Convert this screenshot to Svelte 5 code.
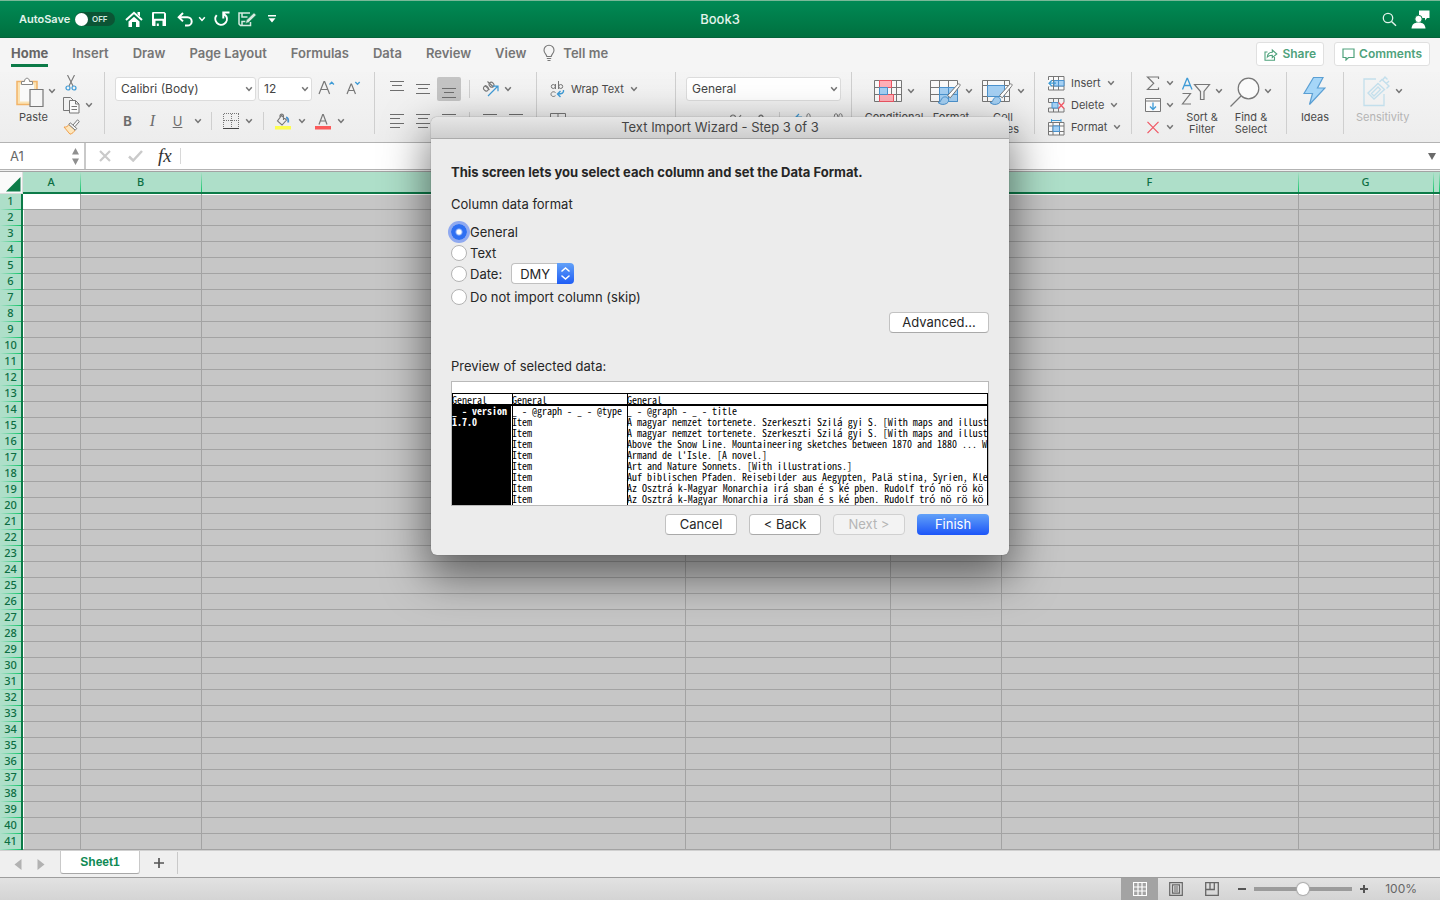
<script>
  const tabs = ['Home', 'Insert', 'Draw', 'Page Layout', 'Formulas', 'Data', 'Review', 'View'];
  const columns = ['A', 'B', 'C', 'D', 'E', 'F', 'G', ''];
  const rows = Array.from({ length: 41 }, (_, i) => i + 1);
  const preview = [
    ['_ - version', '_ - @graph - _ - @type', '_ - @graph - _ - title'],
    ['1.7.0', 'Item', 'A magyar nemzet tortenete. Szerkeszti Szilá gyi S. [With maps and illust'],
    ['', 'Item', 'A magyar nemzet tortenete. Szerkeszti Szilá gyi S. [With maps and illust'],
    ['', 'Item', 'Above the Snow Line. Mountaineering sketches between 1870 and 1880 ... W'],
    ['', 'Item', "Armand de l'Isle. [A novel.]"],
    ['', 'Item', 'Art and Nature Sonnets. [With illustrations.]'],
    ['', 'Item', 'Auf biblischen Pfaden. Reisebilder aus Aegypten, Palä stina, Syrien, Kle'],
    ['', 'Item', 'Az Osztrá k-Magyar Monarchia irá sban é s ké pben. Rudolf tró nö rö kö s'],
    ['', 'Item', 'Az Osztrá k-Magyar Monarchia irá sban é s ké pben. Rudolf tró nö rö kö s']
  ];
  let format = $state('general');
  let zoom = $state(100);
</script>

{#snippet chev()}
  <svg class="chev" width="8" height="6" viewBox="0 0 8 6"><path d="M1.2 1.2 4 4.4 6.8 1.2" fill="none" stroke="currentColor" stroke-width="1.5" /></svg>
{/snippet}

{#snippet lines(list)}
  <svg width="16" height="17" viewBox="0 0 16 17" shape-rendering="crispEdges">
    {#each list as [x, y, w]}<rect {x} {y} width={w} height="1" fill="#6e6e6e" />{/each}
  </svg>
{/snippet}

{#snippet brush()}
  <path d="M29.500 7c1 .8.6 1.600-.2 2.600l-9 11.200-2.700-2.300L27.500 7.600c.7-.7 1.300-1 2-.6z" fill="#fff" stroke="#777" />
  <path d="M8 25.500c2.500 0 2.400-1.600 3.600-3.600 1.300-2.200 4.200-2.700 6-1 1.700 1.700 1.200 4.300-.8 5.500-2.800 1.700-6.600 1.300-8.800-.9z" fill="#a5d0f3" stroke="#4b93cf" />
{/snippet}

<div class="app">
  <header class="titlebar">
    <div class="quick">
      <span class="autosave">AutoSave</span>
      <button class="toggle" role="switch" aria-checked="false" aria-label="AutoSave"><i></i>OFF</button>
      <button class="q home" aria-label="Home">
        <svg width="18" height="17" viewBox="0 0 18 17"><path d="M1 9 9 1.800 17 9" fill="none" stroke="#fff" stroke-width="2" /><path d="M12.500 1H15v4.500L12.500 3.300zM3.500 10.500 9 5.700l5.500 4.800V16H11v-5H7v5H3.500z" fill="#fff" /></svg>
      </button>
      <button class="q save" aria-label="Save">
        <svg width="14" height="14" viewBox="0 0 14 14"><path fill-rule="evenodd" d="M1 0h11.500L14 1.500V14H1a1 1 0 0 1-1-1V1a1 1 0 0 1 1-1zm1 1.500v5.200h10V1.500zM3.500 8.700V14h1.300v-2.500h2V14h3.700V8.700z" fill="#fff" /></svg>
      </button>
      <button class="q undo" aria-label="Undo">
        <svg width="16" height="15" viewBox="0 0 16 15"><path d="M6 1 1.700 5.200 6 9.400M2 5.200h8.500a4.200 4.200 0 0 1 0 8.400H8" fill="none" stroke="#fff" stroke-width="2" /></svg>
      </button>
      <button class="q undo-more" aria-label="Undo list">{@render chev()}</button>
      <button class="q redo" aria-label="Repeat">
        <svg width="16" height="16" viewBox="0 0 16 16"><path d="M2.700 4.200A5.800 5.800 0 1 0 12.300 5.300L9.500 2.500M9.300 7.500V1.500H15.500" fill="none" stroke="#fff" stroke-width="2" /></svg>
      </button>
      <button class="q edit" aria-label="Edit">
        <svg width="19" height="15" viewBox="0 0 19 15"><path d="M12 1H1v11l1.500 1.500H12.500V10M4 1.500v3.500h5.500M4 13V9.500h3.500" fill="none" stroke="#d5ebe0" stroke-width="1.500" /><path d="M16 .8 18.300 3l-7.600 7.400-3.200 1 .9-3.300z" fill="#d5ebe0" stroke="#067a48" stroke-width=".6" /></svg>
      </button>
      <button class="q more" aria-label="Customize toolbar">
        <svg width="8" height="8" viewBox="0 0 8 8"><path d="M0 0h8v1.500H0zM.5 3.200h7L4 7.500z" fill="#fff" /></svg>
      </button>
    </div>
    <h1>Book3</h1>
    <div class="account">
      <button class="q" aria-label="Search">
        <svg width="15" height="15" viewBox="0 0 15 15"><circle cx="6" cy="6" r="4.700" fill="none" stroke="#e3f3eb" stroke-width="1.300" /><path d="m9.500 9.500 4.500 4.300" stroke="#e3f3eb" stroke-width="1.500" /></svg>
      </button>
      <button class="q" aria-label="Account">
        <svg width="19" height="19" viewBox="0 0 19 19"><path d="M8 .5h10.500V8H16l-2 2.500V8H8z" fill="#fff" /><circle cx="7.500" cy="9" r="3.700" fill="#fff" stroke="#057b48" stroke-width="1" /><path d="M.5 18.500c.4-4 2.500-6 7-6s6.600 2 7 6z" fill="#fff" /></svg>
      </button>
    </div>
  </header>

  <nav class="tabs">
    {#each tabs as tab, i}
      <button class="tab" class:active={i === 0}>{tab}</button>
    {/each}
    <button class="tab tell">
      <svg width="12" height="18" viewBox="0 0 12 18"><path d="M3.800 12.500c0-2-2.800-3-2.800-6.300a5 5 0 0 1 10 0c0 3.300-2.800 4.300-2.800 6.300zM3.800 14.500h4.400M4.500 16.500h3" fill="none" stroke="#777" stroke-width="1.100" /></svg>
      Tell me
    </button>
    <span class="spacer"></span>
    <div class="actions">
      <button class="action">
        <svg width="14" height="13" viewBox="0 0 14 13"><path d="M3.500 4H1v8.300h9.500V9M3.300 9c.3-3.500 2.200-4.600 5-4.700V2l4.500 4-4.500 3.700V7.200C6 7.200 4.600 7.500 3.300 9z" fill="none" stroke="#4fa27c" stroke-width="1.100" /></svg>
        Share
      </button>
      <button class="action">
        <svg width="13" height="13" viewBox="0 0 13 13"><path d="M1 1h11v8.500H6.500L4 12V9.500H1z" fill="none" stroke="#4fa27c" stroke-width="1.200" /></svg>
        Comments
      </button>
    </div>
  </nav>

  <section class="ribbon" aria-label="Home ribbon">
    <div class="group clipboard">
      <button class="big paste">
        <span class="pic">
          <svg width="28" height="31" viewBox="0 0 28 31"><path d="M1 5.500h20v23H1z" fill="#fbe3b4" stroke="#f2b468" stroke-width="1.500" /><path d="M4 8.500h14v17H4z" fill="#fafafa" /><path d="M5.500 8.500v-3h3c0-4.400 5-4.400 5 0h3v3z" fill="#fff" stroke="#888" /><path d="M14 13.500h13v17H14z" fill="#f6f6f6" stroke="#777" stroke-width="1.200" /></svg>
          {@render chev()}
        </span>
        <span class="pl">Paste</span>
      </button>
      <div class="stack">
        <button aria-label="Cut"><svg width="12" height="16" viewBox="0 0 12 16"><path d="M2.500 0 8 11M9.500 0 4 11" fill="none" stroke="#777" stroke-width="1.100" /><g fill="none" stroke="#3f9bd6" stroke-width="1.200"><circle cx="3" cy="13" r="2" /><circle cx="9" cy="13" r="2" /></g></svg></button>
        <button aria-label="Copy"><svg width="17" height="17" viewBox="0 0 17 17"><path d="M6.500 13.500h-6V.5h7l3 3" fill="none" stroke="#777" /><path d="M6.500 3.500h6l3.500 3.500v9H6.500zM12.500 3.500V7H16M8.500 9.500H14M8.500 12.500H14" fill="#fafafa" stroke="#777" /></svg>{@render chev()}</button>
        <button aria-label="Format painter"><svg width="17" height="16" viewBox="0 0 17 16"><path d="M1 8c2 .4 4-.7 5-2.500l6 5.500c-.8 2-2.500 3.500-5 4.200z" fill="#fde6bd" stroke="#f0a04b" /><path d="m5.800 5.500 1.500-1.700 6.500 5.700-1.600 1.700zM10 6 14.500.8l1.800 1.700-4.200 5" fill="#f6f6f6" stroke="#777" /></svg></button>
      </div>
    </div>

    <div class="group font">
      <div class="row">
        <label class="field family"><select aria-label="Font"><option>Calibri (Body)</option></select>{@render chev()}</label>
        <label class="field size"><select aria-label="Font size"><option>12</option></select>{@render chev()}</label>
        <button class="grow" aria-label="Increase font size"><svg width="17" height="16" viewBox="0 0 17 16"><path d="M1 13 6 .5h.6L11.600 13M2.800 8.500h7" fill="none" stroke="#777" stroke-width="1.200" /><path d="m11.500 3.500 2.200-2.300 2.200 2.300" fill="none" stroke="#3f9bd6" stroke-width="1.300" /></svg></button>
        <button class="grow" aria-label="Decrease font size"><svg width="15" height="16" viewBox="0 0 15 16"><path d="M1 13 5 3h.5l4 10M2.400 9.500h5.700" fill="none" stroke="#777" stroke-width="1.200" /><path d="m9.300 1 2.200 2.300L13.700 1" fill="none" stroke="#3f9bd6" stroke-width="1.300" /></svg></button>
      </div>
      <div class="row glyphs">
        <button class="bold">B</button>
        <button class="ital">I</button>
        <button class="under">U</button>
        <button class="slim" aria-label="Underline styles">{@render chev()}</button>
        <i class="sep"></i>
        <button class="wide" aria-label="Borders"><svg width="16" height="16" viewBox="0 0 16 16" shape-rendering="crispEdges"><path d="M.5.5v14M15.500.5v14M.5.5h15M8 .5v14M.5 7.500h15" fill="none" stroke="#777" stroke-dasharray="1 1" /><path d="M0 15.500h16" stroke="#444" stroke-width="1" /></svg>{@render chev()}</button>
        <i class="sep"></i>
        <button class="wide" aria-label="Fill color"><svg width="17" height="17" viewBox="0 0 17 17"><path d="M6.500 2.500 11.500 7l-4.500 5L2.500 8zM5 4V2.500a1.800 1.800 0 0 1 3.500 0V7" fill="none" stroke="#777" stroke-width="1.100" /><path d="M11 4.500c2 0 2.500 2 2.200 5" fill="none" stroke="#4b93cf" stroke-width="1.800" /><path d="M0 13h16v3.500H0z" fill="#fdfd4e" /></svg>{@render chev()}</button>
        <button class="wide" aria-label="Font color"><svg width="16" height="17" viewBox="0 0 16 17"><path d="m4 11.500 3.700-10h.6l3.700 10M5.300 8h5.400" fill="none" stroke="#777" stroke-width="1.200" /><path d="M0 13h16v3.500H0z" fill="#fb5a5a" /></svg>{@render chev()}</button>
      </div>
    </div>

    <div class="group align">
      <div class="row">
        <button aria-label="Top">{@render lines([[1, 0, 14], [3, 4, 10], [1, 9, 14]])}</button>
        <button aria-label="Middle">{@render lines([[1, 3, 14], [3, 7, 10], [1, 12, 14]])}</button>
        <button class="pressed" aria-label="Bottom">{@render lines([[1, 7, 14], [3, 11, 10], [1, 16, 14]])}</button>
        <i class="sep"></i>
        <button class="wide" aria-label="Orientation"><svg width="17" height="16" viewBox="0 0 17 16"><g fill="none" stroke="#777" stroke-width="1.100"><ellipse cx="4" cy="7.500" rx="2.200" ry="2.600" transform="rotate(-45 4 7.500)" /><path d="m3 4.500 4.500 4.300M5.500.500l6 5.500" /><ellipse cx="9.500" cy="3.700" rx="2.200" ry="2.600" transform="rotate(-45 9.500 3.700)" /></g><path d="M6 15 15.500 5.500M11 5.200h5v5" fill="none" stroke="#3f9bd6" stroke-width="1.200" /></svg>{@render chev()}</button>
      </div>
      <div class="row">
        <button aria-label="Left">{@render lines([[1, 1, 14], [1, 5, 10], [1, 10, 14], [1, 14, 10]])}</button>
        <button aria-label="Center">{@render lines([[1, 1, 14], [3, 5, 10], [1, 10, 14], [3, 14, 10]])}</button>
        <button aria-label="Right">{@render lines([[1, 1, 14], [5, 5, 10], [1, 10, 14], [5, 14, 10]])}</button>
        <i class="sep"></i>
        <button aria-label="Decrease indent">{@render lines([[1, 1, 14], [7, 5, 8], [7, 10, 8], [1, 14, 14]])}</button>
        <button aria-label="Increase indent">{@render lines([[1, 1, 14], [7, 5, 8], [7, 10, 8], [1, 14, 14]])}</button>
      </div>
    </div>

    <div class="group wrap">
      <div class="row">
        <button class="text"><svg width="15" height="17" viewBox="0 0 15 17"><g fill="none" stroke="#777"><circle cx="3.300" cy="5.500" r="2" /><path d="M5.500 3v5M8.500 0v8M5.500 11.500c-2-1.500-4.500-.5-4.500 1.700s2.500 3 4.500 1.500" /><circle cx="10.700" cy="5.500" r="2" /></g><path d="M13.500 9c.5 3-1.500 4-5.500 4M10.500 10 7.500 13l3 3" fill="none" stroke="#3f9bd6" stroke-width="1.400" /></svg>Wrap Text{@render chev()}</button>
      </div>
      <div class="row">
        <button aria-label="Merge"><svg width="16" height="16" viewBox="0 0 16 16"><path d="M.5.500h15v14H.5zM8 .5v4M.5 4.500h15M.5 10.500h15" fill="none" stroke="#777" /></svg></button>
      </div>
    </div>

    <div class="group number">
      <label class="field numfmt"><select aria-label="Number format"><option>General</option></select>{@render chev()}</label>
      <div class="row numrow">
        <button aria-label="Percent"><svg width="14" height="14" viewBox="0 0 14 14"><path d="M12 1 3 13" stroke="#777" stroke-width="1.200" /><g fill="none" stroke="#777" stroke-width="1.200"><circle cx="4" cy="3.500" r="2.500" /><circle cx="11" cy="10.500" r="2.500" /></g></svg></button>
        <button aria-label="Comma style"><svg width="6" height="14" viewBox="0 0 6 14"><path d="M1 3.500a2 2 0 1 1 3.800.6C4.800 7 3.500 9 1 10.500" fill="none" stroke="#777" stroke-width="1.400" /></svg></button>
        <i class="sep"></i>
        <button aria-label="Increase decimal"><svg width="17" height="17" viewBox="0 0 17 17"><path d="M1 4h6M4 1 1 4l3 3" fill="none" stroke="#3f9bd6" stroke-width="1.200" /><ellipse cx="13.500" cy="3.500" rx="1.700" ry="2.800" fill="none" stroke="#777" /></svg></button>
        <button aria-label="Decrease decimal"><svg width="17" height="17" viewBox="0 0 17 17"><g fill="none" stroke="#777"><ellipse cx="9" cy="3.500" rx="1.700" ry="2.800" /><ellipse cx="13.500" cy="3.500" rx="1.700" ry="2.800" /></g></svg></button>
      </div>
    </div>

    <div class="group styles">
      <button class="big cond">
        <span class="pic"><svg width="29" height="28" viewBox="0 0 29 28"><path d="M.5 3.500h27v21H.5zM.5 10.500h27M.5 17.500h27M5.500 3.500v21M17.500 3.500v21M22.500 3.500v21" fill="#fafafa" stroke="#777" /><path d="M5.500 3.500h12v7h-12zM5.500 17.500h14v7h-14z" fill="#ffb0b8" stroke="#ee5563" /><path d="M5.500 10.500h8v7h-8z" fill="#a5d0f3" stroke="#4b93cf" /></svg>{@render chev()}</span>
        <span>Conditional<br />Formatting</span>
      </button>
      <button class="big">
        <span class="pic"><svg width="31" height="28" viewBox="0 0 31 28"><path d="M.5 3.500h27v21H.5zM.5 10.500h27M.5 17.500h27M9.500 3.500v21M18.500 3.500v21" fill="#fafafa" stroke="#777" /><path d="M9.500 10.500h18v14h-18zM18.500 10.500v14M9.500 17.500h18" fill="#a5d0f3" stroke="#4b93cf" />{@render brush()}</svg>{@render chev()}</span>
        <span>Format<br />as Table</span>
      </button>
      <button class="big">
        <span class="pic"><svg width="31" height="28" viewBox="0 0 31 28"><path d="M.5 3.500h27v21H.5zM.5 8.500h27M.5 19.500h27M5.500 3.500v21M22.500 3.500v21" fill="#fafafa" stroke="#777" /><path d="M5.500 8.500h17v11h-17z" fill="#a5d0f3" stroke="#4b93cf" />{@render brush()}</svg>{@render chev()}</span>
        <span>Cell<br />Styles</span>
      </button>
    </div>

    <div class="group cells">
      <div class="stack">
        <button class="text"><svg width="17" height="15" viewBox="0 0 17 15"><path d="M.5.500h15.500v13.500H.5zM.5 4.500H16M.5 10H16M5.500.5V14M10.500.5V14" fill="#fafafa" stroke="#777" /><path d="M6 4.500h10V10H6zM10.500 4.500V10" fill="#a5d0f3" stroke="#4b93cf" /><path d="M0 4h4v6.500H0z" fill="#fafafa" /><path d="M1 7.200h7M4 4.200l-3 3 3 3" fill="none" stroke="#3f9bd6" stroke-width="1.300" /></svg>Insert{@render chev()}</button>
        <button class="text"><svg width="17" height="15" viewBox="0 0 17 15"><path d="M.5 4.500v-4H16v4M.5 10v4H16v-4M5.500.5v4M10.500.5v4M5.500 10v4M10.500 10v4M.5 4.500h10M.5 10h10" fill="none" stroke="#777" /><path d="M4 4.500h6V10H4z" fill="#a5d0f3" stroke="#4b93cf" /><path d="m10.500 4.500 5.500 6M16 4.500l-5.500 6" stroke="#f05563" stroke-width="1.300" /></svg>Delete{@render chev()}</button>
        <button class="text"><svg width="17" height="17" viewBox="0 0 17 17"><path d="M.5 3.500H16V16H.5zM.5 7H16M.5 12.500H16M5 3.500V16M11.500 3.500V16" fill="#fafafa" stroke="#777" /><path d="M5 7h6.500v5.500H5z" fill="#a5d0f3" stroke="#4b93cf" /><path d="M3.500 1.500h9.500M3.500 0v3M13 0v3" fill="none" stroke="#3f9bd6" /></svg>Format{@render chev()}</button>
      </div>
    </div>

    <div class="group editing">
      <div class="stack">
        <button aria-label="AutoSum"><svg width="16" height="15" viewBox="0 0 16 15"><path d="M13.500 3V1h-11l6.200 6.300L2.500 13.500h11v-2" fill="none" stroke="#777" stroke-width="1.200" /></svg>{@render chev()}</button>
        <button aria-label="Fill"><svg width="16" height="14" viewBox="0 0 16 14"><path d="M.5.500h15v13H.5zM.5 3h15" fill="#fafafa" stroke="#777" /><path d="M8 4.500v7M5 8.500l3 3 3-3" fill="none" stroke="#3f9bd6" stroke-width="1.300" /></svg>{@render chev()}</button>
        <button aria-label="Clear"><svg width="16" height="13" viewBox="0 0 16 13"><path d="m2.500.8 11 11.400M13.500.8l-11 11.400" stroke="#f05563" stroke-width="1.200" /></svg>{@render chev()}</button>
      </div>
      <button class="big">
        <span class="pic"><svg width="30" height="29" viewBox="0 0 30 29"><path d="M1.500 12.500 6 1.500h.5l4.500 11M3 8.500h6.500" fill="none" stroke="#3f9bd6" stroke-width="1.300" /><path d="M1.500 16.500h8l-8 10.500h8.500M13.500 7.500h15l-5.500 7v8h-3.500v-8z" fill="none" stroke="#777" stroke-width="1.200" /></svg>{@render chev()}</span>
        <span>Sort &amp;<br />Filter</span>
      </button>
      <button class="big">
        <span class="pic"><svg width="30" height="31" viewBox="0 0 30 31"><circle cx="18.500" cy="12.500" r="10.300" fill="#fafafa" stroke="#777" stroke-width="1.200" /><path d="M11 20 .5 30.500" stroke="#777" stroke-width="1.300" /></svg>{@render chev()}</span>
        <span>Find &amp;<br />Select</span>
      </button>
    </div>

    <div class="group ideas">
      <button class="big">
        <span class="pic"><svg width="23" height="30" viewBox="0 0 23 30"><path d="M10.500 1.500H20L14.500 12H22L6.500 28.500 9.500 17.500H1z" fill="#a5d6f8" stroke="#5b9fd3" stroke-width="1.200" /></svg></span>
        <span>Ideas</span>
      </button>
    </div>

    <div class="group sens">
      <button class="big faded" disabled>
        <span class="pic"><svg width="28" height="31" viewBox="0 0 28 31"><path d="M13 3H1v26.500h20V18" fill="none" stroke="#c3dfec" stroke-width="1.300" /><path d="M5 17 15 7.500l6.500 6L11 23zM8.500 17.500 15 11l2.500 2.500L11 20zM16.500 6l2.500-2.500L26 10l-2.500 2.500M19.500 4 22 1l2.500 2.500M23 8l3-3" fill="none" stroke="#c3dfec" stroke-width="1.400" /></svg>{@render chev()}</span>
        <span>Sensitivity</span>
      </button>
    </div>
  </section>

  <section class="formula" aria-label="Formula bar">
    <div class="namebox">
      <input aria-label="Name box" value="A1" />
      <svg width="9" height="19" viewBox="0 0 9 19"><path d="M4.500 1 8 7.500H1zM4.500 18 8 11.500H1z" fill="#8f8f8f" /></svg>
    </div>
    <button class="f-cancel" aria-label="Cancel entry"><svg width="12" height="12" viewBox="0 0 12 12"><path d="m1 1 10 10M11 1 1 11" stroke="#cacaca" stroke-width="2.200" /></svg></button>
    <button class="f-ok" aria-label="Confirm entry"><svg width="15" height="12" viewBox="0 0 15 12"><path d="m1 6.500 4.200 4L14 1" fill="none" stroke="#cacaca" stroke-width="2.500" /></svg></button>
    <button class="f-fx" aria-label="Insert function"><em>fx</em></button>
    <input class="f-input" aria-label="Formula" />
    <button class="f-expand" aria-label="Expand"><svg width="8" height="7" viewBox="0 0 8 7"><path d="M0 0h8L4 7z" fill="#6a6a6a" /></svg></button>
  </section>

  <main class="sheet">
    <table class="grid">
      <colgroup>
        <col class="c-head" /><col class="c-a" /><col class="c-b" /><col class="c-c" /><col class="c-d" /><col class="c-e" /><col class="c-f" /><col class="c-g" /><col />
      </colgroup>
      <thead>
        <tr>
          <th class="corner"><svg width="16" height="16" viewBox="0 0 16 16"><path d="M15.500 1v14.500H1z" fill="#0c7b48" /></svg></th>
          {#each columns as c}<th scope="col">{c}</th>{/each}
        </tr>
      </thead>
      <tbody>
        {#each rows as r}
          <tr>
            <th scope="row">{r}</th>
            {#each columns as c}<td class:cursor={r === 1 && c === 'A'}></td>{/each}
          </tr>
        {/each}
      </tbody>
    </table>
  </main>

  <nav class="sheets">
    <button class="arrow" aria-label="Previous sheet"><svg width="8" height="11" viewBox="0 0 8 11"><path d="M7.500 0v11L.5 5.500z" fill="#b2b2b2" /></svg></button>
    <button class="arrow" aria-label="Next sheet"><svg width="8" height="11" viewBox="0 0 8 11"><path d="M.5 0v11l7-5.500z" fill="#b2b2b2" /></svg></button>
    <button class="sheet-tab">Sheet1</button>
    <button class="add" aria-label="Add sheet"><svg width="10" height="10" viewBox="0 0 10 10"><path d="M5 0v10M0 5h10" stroke="#555" stroke-width="1.700" /></svg></button>
  </nav>

  <footer class="status">
    <button class="view on" aria-label="Normal view"><svg width="14" height="14" viewBox="0 0 14 14"><path d="M.5.500h13v13H.5zM5 .5v13M9 .5v13M.5 5h13M.5 9h13" fill="none" stroke="#fff" stroke-width="1.200" /></svg></button>
    <button class="view" aria-label="Page layout view"><svg width="14" height="14" viewBox="0 0 14 14"><path d="M.7.700h12.600v12.600H.7zM3.500 2.800h7v8.400h-7zM5 5h4M5 7h4M5 9h4" fill="none" stroke="#666" stroke-width="1.200" /></svg></button>
    <button class="view" aria-label="Page break view"><svg width="14" height="14" viewBox="0 0 14 14"><path d="M.7.700h12.600v12.600H.7zM.7 7.500h8.600V.7M5 .7v6.800" fill="none" stroke="#666" stroke-width="1.300" /></svg></button>
    <button class="zoom-step" aria-label="Zoom out"><svg width="8" height="8" viewBox="0 0 8 8"><path d="M0 4h8" stroke="#555" stroke-width="2" /></svg></button>
    <input type="range" aria-label="Zoom" min="0" max="200" bind:value={zoom} />
    <button class="zoom-step" aria-label="Zoom in"><svg width="8" height="8" viewBox="0 0 8 8"><path d="M4 0v8M0 4h8" stroke="#555" stroke-width="2" /></svg></button>
    <output>{zoom}%</output>
  </footer>

  <div class="overlay">
    <div class="dialog" role="dialog" aria-labelledby="dlg-title">
      <div class="dlg-title" id="dlg-title">Text Import Wizard - Step 3 of 3</div>
      <form class="dlg-body" onsubmit={(e) => e.preventDefault()}>
        <h2>This screen lets you select each column and set the Data Format.</h2>
        <fieldset>
          <legend>Column data format</legend>
          <label class="opt"><input type="radio" name="fmt" value="general" bind:group={format} />General</label>
          <label class="opt"><input type="radio" name="fmt" value="text" bind:group={format} />Text</label>
          <div class="opt-row">
            <label class="opt"><input type="radio" name="fmt" value="date" bind:group={format} />Date:</label>
            <label class="dmy">
              <select aria-label="Date order"><option>DMY</option></select>
              <svg width="17" height="20" viewBox="0 0 17 20"><path d="M5 7.500 8.500 4.500 12 7.500M5 12.500l3.500 3 3.500-3" fill="none" stroke="#fff" stroke-width="1.600" stroke-linecap="round" /></svg>
            </label>
          </div>
          <label class="opt last"><input type="radio" name="fmt" value="skip" bind:group={format} />Do not import column (skip)</label>
        </fieldset>
        <button class="btn advanced" type="button">Advanced...</button>
        <p class="preview-label">Preview of selected data:</p>
        <div class="preview">
          <table>
            <colgroup><col class="p1" /><col class="p2" /><col /></colgroup>
            <thead><tr><th>General</th><th>General</th><th>General</th></tr></thead>
            <tbody>
              {#each preview as line}
                <tr>{#each line as cell}<td>{cell}</td>{/each}</tr>
              {/each}
            </tbody>
          </table>
        </div>
        <div class="buttons">
          <button class="btn" type="button">Cancel</button>
          <button class="btn" type="button">&lt; Back</button>
          <button class="btn" type="button" disabled>Next &gt;</button>
          <button class="btn primary" type="submit">Finish</button>
        </div>
      </form>
    </div>
  </div>
</div>

<style>
  :global(body) { margin: 0; }
  * { box-sizing: border-box; }
  .app {
    position: relative;
    display: flex;
    flex-direction: column;
    min-height: 100vh;
    overflow: hidden;
    font: 13px/16px Inter, "Liberation Sans", sans-serif;
    color: #4a4a4a;
    background: #efefef;
  }
  svg { display: block; flex: none; }
  button, select, input { font: inherit; color: inherit; }
  button { padding: 0; border: 0; background: none; display: flex; align-items: center; }
  .chev { color: #757575; }

  .titlebar {
    display: grid;
    grid-template-columns: 1fr auto 1fr;
    align-items: center;
    height: 38px;
    border-top: 1px solid #79b898;
    border-bottom: 1px solid #05633a;
    background: linear-gradient(#008a55, #00703f);
    color: #e3f3eb;
  }
  .titlebar h1 { margin: 0; font-size: 13px; font-weight: 500; }
  .titlebar .chev { color: #fff; }
  .quick { display: flex; align-items: center; padding-left: 19px; }
  .autosave { width: 56px; font-size: 11px; font-weight: 600; }
  .toggle {
    width: 40px; height: 14px; gap: 4px; border-radius: 7px;
    background: #0b5434; color: #d5ebe0; font-size: 8px; font-weight: 600;
  }
  .toggle i { width: 13px; height: 13px; border-radius: 50%; background: #fff; }
  .q.home { margin-left: 10px; }
  .q.save { margin-left: 9px; }
  .q.undo { margin-left: 11px; }
  .q.undo-more { margin-left: 5px; }
  .q.redo { margin-left: 8px; }
  .q.edit { margin-left: 8px; }
  .q.more { margin-left: 11px; }
  .account { display: flex; justify-content: flex-end; align-items: center; gap: 14px; padding-right: 10px; }

  .tabs { display: flex; align-items: center; height: 34px; padding: 0 10px 2px 11px; gap: 24px; background: #f5f5f5; }
  .tab { font-weight: 600; color: #767676; height: 25px; border-bottom: 3px solid transparent; padding-top: 1px; }
  .tab.active { font-weight: 700; color: #666; border-bottom-color: #0c7b48; }
  .tell { gap: 8px; margin-left: -7px; }
  .spacer { flex: 1; }
  .actions { display: flex; gap: 10px; }
  .action {
    height: 24px; gap: 4px; padding: 0 7px; border: 1px solid #e0e0e0; border-radius: 3px;
    background: #fff; color: #4fa27c; font-size: 12px; font-weight: 600;
  }

  .ribbon { display: flex; padding-bottom: 8px; background: linear-gradient(#f4f4f4, #ededed); font-size: 11px; line-height: 12px; }
  .group { display: flex; flex: none; height: 62px; padding-top: 5px; border-right: 1px solid #cfcfcf; }
  .group:last-child { border: 0; }
  .row { display: flex; align-items: center; height: 24px; }
  .sep { width: 1px; height: 18px; background: #cfcfcf; }
  .big { flex-direction: column; text-align: center; justify-content: flex-start; }
  .big .pic { display: flex; flex: none; align-items: center; gap: 4px; height: 28px; }
  .big > span:last-child { margin-top: 6px; }
  .stack { display: flex; flex-direction: column; margin-top: -5px; }
  .stack button { flex: none; gap: 5px; height: 22px; }
  .text { gap: 6px; white-space: nowrap; }
  .stack .text { gap: 6px; }

  .clipboard { width: 105px; padding-left: 16px; gap: 7px; }
  .clipboard .big { align-items: flex-start; }
  .clipboard .pl { padding-left: 3px; }
  .clipboard .stack button:first-child { padding-left: 2px; }

  .font { flex-direction: column; gap: 8px; width: 270px; padding-left: 10px; }
  .field { position: relative; display: flex; align-items: center; }
  .field select {
    appearance: none; width: 100%; height: 24px; padding: 0 16px 0 5px; font-size: 12px;
    border: 1px solid #dcdcdc; border-radius: 3px; background: #fff; color: #444;
  }
  .field .chev { position: absolute; right: 3px; pointer-events: none; }
  .family { width: 141px; margin-right: 2px; }
  .size { width: 54px; margin-right: 6px; }
  .grow { width: 28px; }
  .glyphs button { width: 25px; justify-content: center; font-size: 13px; color: #6d6d6d; }
  .glyphs .slim { width: 16px; }
  .glyphs .sep { margin: 0 6px 0 5px; }
  .glyphs .wide { width: 40px; gap: 6px; }
  .bold { font-weight: 700; }
  .glyphs .ital { font: italic 16px/16px "Liberation Serif", serif; }
  .under { text-decoration: underline; }

  .align { flex-direction: column; gap: 8px; width: 162px; padding-left: 10px; }
  .align .row button { width: 24px; height: 24px; margin-right: 2px; justify-content: center; }
  .align .sep { margin: 0 8px 0 6px; }
  .align .row .wide { width: 38px; gap: 5px; }
  .align .pressed { background: #c4c4c4; border-radius: 2px; }

  .wrap { flex-direction: column; gap: 8px; width: 139px; padding-left: 13px; }
  .number { flex-direction: column; gap: 8px; width: 176px; padding-left: 10px; }
  .numfmt { width: 155px; }
  .numrow { padding-left: 43px; gap: 15px; }

  .styles { width: 183px; padding-left: 12px; gap: 2px; }
  .styles .big { width: 50px; }
  .styles .cond { width: 60px; }
  .cells { width: 97px; padding-left: 13px; }

  .editing { width: 155px; padding-left: 13px; gap: 7px; }
  .ideas { width: 57px; justify-content: center; }
  .sens { flex: 1; padding-left: 12px; }
  .faded { color: #b4b4b4; }

  .formula { display: flex; align-items: center; height: 28px; border: solid #b3b3b3; border-width: 1px 0; background: #fff; }
  .namebox { display: flex; align-items: center; width: 86px; height: 26px; border-right: 2px solid #c9c9c9; padding: 0 4px 0 10px; }
  .namebox input { flex: 1; min-width: 0; padding: 0; border: 0; background: none; color: #666; outline: 0; }
  .f-cancel { margin-left: 13px; }
  .f-ok { margin-left: 17px; }
  .f-fx { width: 22px; margin-left: 15px; font: 19px/20px "Liberation Serif", serif; color: #333; }
  .f-input { flex: 1; height: 16px; border: 0; border-left: 1px solid #d8d8d8; outline: 0; }
  .f-expand { padding: 0 4px; }

  .sheet { flex: 1; margin-top: 1px; border-top: 1px solid #a3a3a3; background: #c6c6c6; }
  .grid { width: 100%; table-layout: fixed; border-spacing: 0; font: 11px/14px "Noto Sans", sans-serif; color: #0c6e43; }
  .grid th, .grid td { padding: 0; }
  .grid th { font-weight: 500; }
  .c-head { width: 23px; }
  .c-a { width: 58px; }
  .c-b { width: 121px; }
  .c-c { width: 484px; }
  .c-d { width: 205px; }
  .c-e { width: 111px; }
  .c-f { width: 297px; }
  .c-g { width: 135px; }
  .grid thead th { height: 22px; border-bottom: 2px solid #0c7b48; }
  .grid thead th[scope] { padding-right: 2px; background: linear-gradient(#aedfc9, #10c468) right / 1px 100% no-repeat, #aedfc9; }
  .grid thead th.corner { border-right: 1px solid #ddd; border-bottom: 1px solid #ddd; background: #fafafa; }
  .corner svg { margin: 3px 0 0 5px; }
  .grid tbody th {
    height: 16px;
    padding-bottom: 2px;
    border-right: 2px solid #0c7b48;
    background: linear-gradient(90deg, #aedfc9, #10c468) bottom / 100% 1px no-repeat, #aedfc9;
  }
  .grid td { border-right: 1px solid #a3a3a3; border-bottom: 1px solid #a3a3a3; background: #c6c6c6; }
  .grid td.cursor { background: #fff; }
  .grid tbody tr:first-child td { box-shadow: inset 0 1px #fff; }
  .grid tbody th + td { box-shadow: inset 1px 0 #fff; }

  .sheets { display: flex; align-items: flex-start; height: 27px; border-top: 1px solid #d0d0d0; background: #efefef; padding-left: 14px; }
  .arrow { height: 26px; margin-right: 15px; }
  .sheet-tab { justify-content: center; width: 80px; height: 23px; border: 1px solid #c9c9c9; border-top: 0; border-bottom: 1px solid #a8a8a8; border-radius: 0 0 3px 3px; background: #fff; color: #0f8a55; font: 700 12px/16px "Liberation Sans", sans-serif; }
  .add { justify-content: center; width: 38px; height: 22px; border-right: 1px solid #c9c9c9; margin-top: 1px; }

  .status { display: flex; align-items: center; justify-content: flex-end; height: 23px; border-top: 1px solid #9d9d9d; background: linear-gradient(#e2e2e2, #d4d4d4); padding-right: 23px; color: #666; }
  .view { justify-content: center; width: 36px; height: 22px; }
  .view.on { background: #a3a3a3; width: 37px; }
  .zoom-step { margin: 0 8px; }
  .status output { margin-left: 9px; font-size: 12px; }
  .status input { appearance: none; width: 98px; height: 14px; margin: 0; background: linear-gradient(#9b9b9b, #9b9b9b) center / 100% 4px no-repeat; }
  .status input::-webkit-slider-thumb { appearance: none; width: 12px; height: 12px; border-radius: 50%; background: #fff; box-shadow: 0 0 1px 1px #aaa; }

  .overlay { position: absolute; inset: 0; display: flex; justify-content: center; align-items: flex-start; padding-top: 117px; }
  .dialog { width: 578px; border-radius: 6px; background: #ececec; color: #262626; box-shadow: 0 0 1px #555, 0 18px 44px 4px rgba(0, 0, 0, 0.5); overflow: hidden; }
  .dlg-title { height: 22px; border-bottom: 1px solid #ababab; background: linear-gradient(#e6e6e6, #cecece); text-align: center; line-height: 21px; color: #444; }
  .dlg-body { display: flex; flex-direction: column; padding: 25px 20px 20px; }
  .dlg-body h2 { margin: 0 0 16px; font-size: 13px; font-weight: 700; white-space: nowrap; }
  fieldset { display: flex; flex-direction: column; margin: 0; padding: 0; border: 0; }
  legend { padding: 0; margin-bottom: 9px; }
  .opt { display: flex; align-items: center; gap: 3px; height: 21px; }
  .opt-row { display: flex; align-items: center; gap: 9px; height: 21px; }
  .last { margin-top: 2px; }
  .opt input { appearance: none; width: 16px; height: 16px; margin: 0; border: 1px solid #b3b3b3; border-radius: 50%; background: #fff; }
  .opt input:checked { border: 0; background: radial-gradient(#fff 2px, #2e6ff2 4px); box-shadow: 0 0 0 3px #8fa9f0; }
  .dmy { display: flex; height: 21px; }
  .dmy select { appearance: none; width: 46px; padding: 0 0 0 8px; border: 1px solid #c0c0c0; border-right: 0; border-radius: 4px 0 0 4px; background: #fff; outline: 0; }
  .dmy svg { height: 21px; border-radius: 0 4px 4px 0; background: linear-gradient(#62a1f8, #1f5df5); }
  .btn { justify-content: center; width: 72px; height: 21px; padding-bottom: 2px; border: 1px solid #c2c2c2; border-bottom-color: #a9a9a9; border-radius: 4px; background: #fff; }
  .btn:disabled { background: #f3f3f3; border-color: #d0d0d0; color: #b5b5b5; }
  .primary { border: 0; background: linear-gradient(#62a1f8, #1c55f8); color: #fff; }
  .advanced { align-self: flex-end; width: 100px; margin-top: 5px; }
  .preview-label { margin: 25px 0 7px; }
  .preview { height: 125px; padding-top: 11px; border: 1px solid #b9b9b9; background: #fff; overflow: hidden; }
  .preview table { width: 100%; table-layout: fixed; border-spacing: 0; font: 10px/10px "Noto Sans Mono CJK SC", "Liberation Mono", monospace; font-variant-ligatures: none; font-kerning: none; color: #000; border-right: 1px solid #000; }
  .p1 { width: 60px; }
  .p2 { width: 115px; }
  .preview th, .preview td { height: 11px; padding: 0; text-align: left; vertical-align: top; white-space: pre; box-shadow: inset 1px 0 #000; }
  .preview th { height: 13px; padding-top: 1px; font-weight: 400; line-height: 9px; border-top: 1px solid #000; border-bottom: 2px solid #000; }
  .preview td:first-child { background: #000; color: #fff; border-right: 1px solid #fff; font-weight: 700; }
  .buttons { display: flex; justify-content: flex-end; gap: 12px; margin-top: 8px; }
</style>
